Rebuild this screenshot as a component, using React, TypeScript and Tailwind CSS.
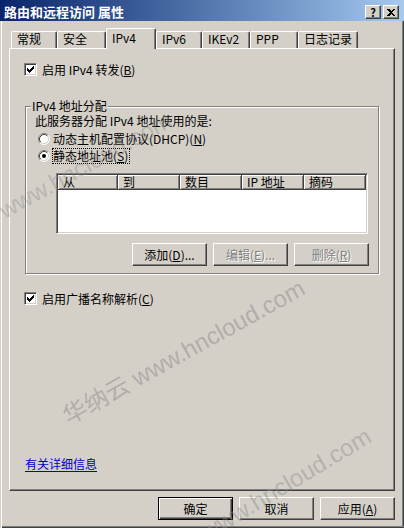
import type { ReactNode } from "react";

const raised =
  "border border-t-white border-l-white border-r-[#404040] border-b-[#404040] shadow-[inset_-1px_-1px_0_#808080]";

function Button({ children, isDefault, disabled }: { children: ReactNode; isDefault?: boolean; disabled?: boolean }) {
  const frame = isDefault
    ? "border border-black shadow-[inset_1px_1px_0_#fff,inset_-1px_-1px_0_#404040,inset_-2px_-2px_0_#808080]"
    : raised;
  const text = disabled ? "text-[#808080] [text-shadow:1px_1px_0_#fff]" : "text-black";
  return (
    <button className={`flex h-[23px] w-[75px] items-center justify-center bg-[#d4d0c8] text-[12px] leading-[14px] ${frame} ${text}`}>
      {children}
    </button>
  );
}

function Check() {
  return (
    <span className="flex h-[13px] w-[13px] shrink-0 items-center justify-center border border-t-[#808080] border-l-[#808080] border-r-white border-b-white bg-white shadow-[inset_1px_1px_0_#404040,inset_-1px_-1px_0_#d4d0c8]">
      <svg width="7" height="7" viewBox="0 0 7 7" shapeRendering="crispEdges">
        <path d="M0 2h1v3H0zM1 3h1v3H1zM2 4h1v3H2zM3 3h1v3H3zM4 2h1v3H4zM5 1h1v3H5zM6 0h1v3H6z" fill="#000" />
      </svg>
    </span>
  );
}

function Radio({ on }: { on?: boolean }) {
  return (
    <svg width="12" height="12" viewBox="0 0 12 12" className="shrink-0">
      <circle cx="6" cy="6" r="5" fill="#fff" />
      <path d="M2.11 9.89A5.5 5.5 0 0 1 9.89 2.11" stroke="#808080" fill="none" />
      <path d="M9.89 2.11A5.5 5.5 0 0 1 2.11 9.89" stroke="#fff" fill="none" />
      <path d="M2.82 9.18A4.5 4.5 0 0 1 9.18 2.82" stroke="#404040" fill="none" />
      <path d="M9.18 2.82A4.5 4.5 0 0 1 2.82 9.18" stroke="#d4d0c8" fill="none" />
      {on && <circle cx="6" cy="6" r="2" fill="#000" />}
    </svg>
  );
}

const tabs = [
  { label: "常规", w: "w-[46px]" },
  { label: "安全", w: "w-[49px]" },
  { label: "IPv4", w: "w-[50px]", active: true },
  { label: "IPv6", w: "w-[46px]" },
  { label: "IKEv2", w: "w-[48px]" },
  { label: "PPP", w: "w-[48px]" },
  { label: "日志记录", w: "w-[60px]" },
];

const columns = [
  { label: "从", w: "w-[60px]" },
  { label: "到", w: "w-[62px]" },
  { label: "数目", w: "w-[62px]" },
  { label: "IP 地址", w: "w-[62px]" },
  { label: "摘码", w: "w-[62px]" },
];

export default function App() {
  return (
    <div className="relative flex h-[528px] w-[404px] flex-col overflow-hidden bg-[#d4d0c8] text-[12px] leading-[14px] text-black [font-family:'Noto_Sans_CJK_SC','Liberation_Sans',sans-serif] shadow-[inset_1px_0_0_#d4d0c8,inset_2px_0_0_#fff,inset_0_-1px_0_#404040,inset_0_-2px_0_#808080,inset_-1px_0_0_#404040,inset_-2px_0_0_#808080]">
      {/* Title bar */}
      <div className="flex h-[21px] shrink-0 items-start bg-gradient-to-r from-[#0a246a] to-[#a6caf0] pl-[4px] pr-[5px] pt-[5px]">
        <span className="text-[13px] font-bold leading-[14px] text-white">路由和远程访问 属性</span>
        <div className="ml-auto flex gap-[2px]">
          <span className={`flex h-[14px] w-[16px] items-center justify-center bg-[#d4d0c8] text-[11px] font-bold leading-[12px] ${raised}`}>?</span>
          <span className={`flex h-[14px] w-[16px] items-center justify-center bg-[#d4d0c8] ${raised}`}>
            <svg width="8" height="7" viewBox="0 0 8 7" shapeRendering="crispEdges">
              <path d="M0 0h2l2 2 2-2h2L5 3.5 8 7H6L4 5 2 7H0l3-3.5z" fill="#000" />
            </svg>
          </span>
        </div>
      </div>

      {/* Tabs */}
      <div className="mt-[7px] flex h-[20px] shrink-0 items-end pl-[11px]">
        {tabs.map((t) =>
          t.active ? (
            <div
              key={t.label}
              className={`relative top-px z-10 h-[21px] ${t.w} rounded-t-[2px] border-l border-t border-r border-l-white border-t-white border-r-[#404040] bg-[#d4d0c8] pl-[5px] pt-[2px] shadow-[inset_-1px_0_0_#808080]`}
            >
              {t.label}
            </div>
          ) : (
            <div
              key={t.label}
              className={`h-[17px] ${t.w} rounded-t-[2px] border-l border-t border-r border-l-white border-t-white border-r-[#404040] pl-[5px] shadow-[inset_-1px_0_0_#808080]`}
            >
              {t.label}
            </div>
          )
        )}
      </div>

      {/* Panel */}
      <div className="mx-[9px] flex h-[443px] shrink-0 flex-col border border-t-white border-l-white border-r-[#404040] border-b-[#404040] pl-[14px] pt-[14px] pb-[19px] shadow-[inset_-1px_-1px_0_#808080]">
        <label className="flex h-[13px] items-center gap-[5px]">
          <Check />
          <span>
            启用 IPv4 转发(<u>B</u>)
          </span>
        </label>

        {/* Group box */}
        <div className="relative ml-px mt-[30px] flex h-[168px] w-[354px] shrink-0 flex-col border border-[#808080] pl-[9px] pr-[9px] pt-[5px] shadow-[inset_1px_1px_0_#fff,1px_1px_0_#fff]">
          <span className="absolute -top-[8px] left-[5px] bg-[#d4d0c8] px-px">IPv4 地址分配</span>
          <div className="flex h-[18px] items-center">此服务器分配 IPv4 地址使用的是:</div>
          <div className="ml-[3px] flex h-[17px] items-center gap-[3px]">
            <Radio />
            <span>
              动态主机配置协议(DHCP)(<u>N</u>)
            </span>
          </div>
          <div className="ml-[3px] flex h-[17px] items-center gap-[2px]">
            <Radio on />
            <span className="border border-dotted border-black pr-px">
              静态地址池(<u>S</u>)
            </span>
          </div>

          {/* List view */}
          <div className="ml-[21px] mt-[9px] h-[61px] w-[312px] border border-t-[#808080] border-l-[#808080] border-r-white border-b-white bg-white p-px shadow-[inset_1px_1px_0_#404040,inset_-1px_-1px_0_#d4d0c8]">
            <div className="flex h-[15px]">
              {columns.map((c) => (
                <div
                  key={c.label}
                  className={`${c.w} border-r border-b border-r-[#404040] border-b-[#404040] bg-[#d4d0c8] pl-[5px] leading-[14px] shadow-[inset_1px_1px_0_#fff,inset_-1px_-1px_0_#808080]`}
                >
                  {c.label}
                </div>
              ))}
            </div>
          </div>

          <div className="mt-[9px] flex justify-end gap-[6px]">
            <Button>
              添加(<u>D</u>)...
            </Button>
            <Button disabled>
              编辑(<u>E</u>)...
            </Button>
            <Button disabled>
              删除(<u>R</u>)
            </Button>
          </div>
        </div>

        <label className="mt-[18px] flex h-[13px] items-center gap-[5px]">
          <Check />
          <span>
            启用广播名称解析(<u>C</u>)
          </span>
        </label>

        <a className="ml-px mt-auto w-fit text-[#0000cc] underline underline-offset-[2px]">有关详细信息</a>
      </div>

      {/* Dialog buttons */}
      <div className="mt-[6px] flex justify-end gap-[6px] pr-[9px]">
        <Button isDefault>确定</Button>
        <Button>取消</Button>
        <Button>
          应用(<u>A</u>)
        </Button>
      </div>

      {/* Watermarks */}
      <span className="pointer-events-none absolute left-[-6px] top-[200px] origin-top-left -rotate-[29deg] whitespace-nowrap text-[24px] leading-[28px] text-[#8c8c8c]/40 [font-family:'Liberation_Sans',sans-serif]">
        www.hncloud.com
      </span>
      <span className="pointer-events-none absolute left-[58px] top-[406px] origin-top-left -rotate-[29deg] whitespace-nowrap text-[24px] leading-[28px] text-[#8c8c8c]/50 [font-family:'Liberation_Sans','Noto_Sans_CJK_SC',sans-serif]">
        华纳云 www.hncloud.com
      </span>
      <span className="pointer-events-none absolute left-[196px] top-[522px] origin-top-left -rotate-[31deg] whitespace-nowrap text-[24px] leading-[28px] text-[#8c8c8c]/45 [font-family:'Liberation_Sans',sans-serif]">
        www.hncloud.com
      </span>
    </div>
  );
}
